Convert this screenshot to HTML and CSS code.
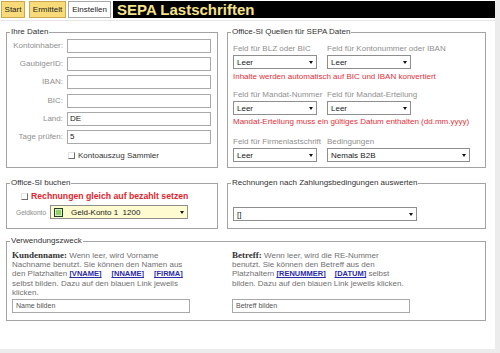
FILE: index.html
```html
<!DOCTYPE html>
<html lang="de">
<head>
<meta charset="utf-8">
<title>SEPA Lastschriften</title>
<link rel="stylesheet" href="styles.css">
</head>
<body>
<div class="page">
  <div class="topbar">
    <div class="tab tab-y tab-start">Start</div>
    <div class="tab tab-y tab-erm">Ermittelt</div>
    <div class="tab tab-ein">Einstellen</div>
    <div class="title">SEPA Lastschriften</div>
  </div>
  <div class="content">
    <div class="row row1">
      <fieldset class="fs fs-left">
        <legend>Ihre Daten</legend>
        <div class="grid">
          <div class="lbl">Kontoinhaber:</div><div class="inp"></div>
          <div class="lbl">GaubigerID:</div><div class="inp"></div>
          <div class="lbl">IBAN:</div><div class="inp"></div>
          <div class="lbl">BIC:</div><div class="inp"></div>
          <div class="lbl">Land:</div><div class="inp">DE</div>
          <div class="lbl">Tage prüfen:</div><div class="inp">5</div>
        </div>
        <div class="chkrow"><span class="chk"></span><span>Kontoauszug Sammler</span></div>
      </fieldset>
      <fieldset class="fs fs-right">
        <legend>Office-SI Quellen für SEPA Daten</legend>
        <div class="q">
          <div class="pair">
            <div class="fld"><div class="fl">Feld für BLZ oder BIC</div><div class="sel"><span>Leer</span><span class="arr"></span></div></div>
            <div class="fld"><div class="fl">Feld für Kontonummer oder IBAN</div><div class="sel"><span>Leer</span><span class="arr"></span></div></div>
          </div>
          <div class="warn">Inhalte werden automatisch auf BIC und IBAN konvertiert</div>
          <div class="pair p2">
            <div class="fld"><div class="fl">Feld für Mandat-Nummer</div><div class="sel"><span>Leer</span><span class="arr"></span></div></div>
            <div class="fld"><div class="fl">Feld für Mandat-Erteilung</div><div class="sel"><span>Leer</span><span class="arr"></span></div></div>
          </div>
          <div class="warn w2">Mandat-Erteilung muss ein gültiges Datum enthalten (dd.mm.yyyy)</div>
          <div class="pair p3">
            <div class="fld"><div class="fl">Feld für Firmenlastschrift</div><div class="sel"><span>Leer</span><span class="arr"></span></div></div>
            <div class="fld wide"><div class="fl">Bedingungen</div><div class="sel"><span>Nemals B2B</span><span class="arr"></span></div></div>
          </div>
        </div>
      </fieldset>
    </div>
    <div class="row row2">
      <fieldset class="fs fs-left">
        <legend>Office-SI buchen</legend>
        <div class="chkrow2"><span class="chk"></span><span class="redbold">Rechnungen gleich auf bezahlt setzen</span></div>
        <div class="geldrow">
          <span class="glbl">Geldkonto</span>
          <div class="sel sel-geld"><span class="gicon"></span><span class="gtext">Geld-Konto 1&nbsp; 1200</span><span class="arr"></span></div>
        </div>
      </fieldset>
      <fieldset class="fs fs-right">
        <legend>Rechnungen nach Zahlungsbedingungen auswerten</legend>
        <div class="sel sel-zb"><span>[]</span><span class="arr"></span></div>
      </fieldset>
    </div>
    <fieldset class="fs fs-full">
      <legend>Verwendungszweck</legend>
      <div class="vz">
        <div class="vcol">
          <div class="desc"><span class="kb">Kundenname:</span> Wenn leer, wird Vorname<br>Nachname benutzt. Sie können den Namen aus<br>den Platzhalten <a class="ph">[VNAME]</a><a class="ph ph-gap">[NNAME]</a><a class="ph ph-gap">[FIRMA]</a><br>selbst bilden. Dazu auf den blauen Link jeweils<br>klicken.</div>
          <div class="inp inp-vz">Name bilden</div>
        </div>
        <div class="vcol">
          <div class="desc"><span class="kb">Betreff:</span> Wenn leer, wird die RE-Nummer<br>benutzt. Sie können den Betreff aus den<br>Platzhaltern <a class="ph">[RENUMMER]</a><a class="ph ph-gap2">[DATUM]</a> selbst<br>bilden. Dazu auf den blauen Link jeweils klicken.</div>
          <div class="inp inp-vz">Betreff bilden</div>
        </div>
      </div>
    </fieldset>
  </div>
</div>
</body>
</html>
```

FILE: styles.css
```css
* { box-sizing: border-box; }
body {
  margin: 0;
  background: #ececec;
  font-family: "Liberation Sans", Arial, sans-serif;
  font-size: 8px;
  color: #333;
}
.page { width: 495px; height: 349px; background: #fff; }

.topbar { display: flex; height: 20px; padding-top: 1px; background: #fff; }
.tab {
  height: 17px;
  display: flex; align-items: center; justify-content: center;
  font-size: 8px; color: #222;
  border: 1px solid #c9a94e;
}
.tab-y { background: #f8da78; }
.tab-start { margin-left: 1px; width: 24px; }
.tab-erm { margin-left: 4px; width: 37px; }
.tab-ein { margin-left: 2px; width: 43px; background: #fff; border-color: #a9a9a9; }
.title {
  margin-left: 2px; flex: 1; height: 17px;
  background: #000; color: #f6e38b;
  font-weight: bold; font-size: 15px;
  padding-left: 4px;
  display: flex; align-items: center;
}

.content { border-top: 1px solid #e6e6e6; padding: 6px 0 0 6px; }

.fs {
  margin: 0; padding: 0; min-width: 0;
  border: 1px solid #a3a3a3;
}
.fs legend {
  padding: 0 1px; margin-left: 3px;
  line-height: 10px; font-size: 8px; color: #333;
}
.row { display: flex; gap: 9px; }
.row1 .fs { height: 141px; }
.fs-left { width: 212px; }
.fs-right { width: 259px; }
.row2 { margin-top: 10px; }
.row2 .fs { height: 51px; }
.fs-full { width: 480px; height: 85px; margin-top: 7px; }

.grid {
  display: grid;
  grid-template-columns: 55px 144px;
  column-gap: 4px; row-gap: 4.2px;
  grid-auto-rows: 14px;
  margin: 2px 0 0 1px;
}
.lbl { text-align: right; color: #8f8f8f; line-height: 14px; white-space: nowrap; }
.inp {
  border: 1px solid #a9a9a9; height: 14px;
  padding-left: 2px; line-height: 12px; color: #222;
}
.chkrow {
  display: flex; align-items: center; gap: 3px;
  height: 10px; margin: 7px 0 0 61px; color: #333;
}
.chk {
  width: 7px; height: 7px;
  border-left: 1px solid #e2e2e2; border-top: 1px solid #e2e2e2;
  border-right: 1px solid #6e6e6e; border-bottom: 1px solid #6e6e6e;
}

.q { padding: 7px 0 0 5px; }
.pair { display: flex; gap: 10px; }
.fld { width: 84px; display: flex; flex-direction: column; }
.fld.wide { width: 143px; }
.fl { height: 10px; line-height: 10px; color: #8f8f8f; white-space: nowrap; }
.fld .sel { margin-top: 1px; }
.warn { color: #e0313a; line-height: 10px; margin-top: 3px; white-space: nowrap; }
.p2 { margin-top: 8px; }
.w2 { margin-top: 2px; }
.p3 { margin-top: 10px; }

.sel {
  height: 14px; border: 1px solid #8e8e8e; background: #fff;
  display: flex; align-items: center;
  padding-left: 3px; color: #1a1a1a; white-space: nowrap;
}
.arr {
  margin-left: auto; margin-right: 3px;
  width: 0; height: 0;
  border-left: 2.5px solid transparent; border-right: 2.5px solid transparent;
  border-top: 3px solid #111;
}

.chkrow2 {
  display: flex; align-items: center;
  height: 10px; margin: 3px 0 0 14px;
}
.redbold { color: #e0252f; font-weight: bold; font-size: 8.7px; margin-left: 3px; white-space: nowrap; }
.geldrow { display: flex; align-items: center; margin: 4px 0 0 9px; }
.glbl { width: 34px; font-size: 6.6px; color: #8a8a8a; }
.sel-geld { width: 138px; background: #fdfbcf; padding-left: 3px; }
.gicon {
  width: 9px; height: 9px;
  border: 1px solid #1f3f1f; background: #8ecf6c;
  box-shadow: inset 0 0 0 1px #d8f0c8;
}
.gtext { margin-left: 8px; }
.sel-zb { width: 184px; margin: 19px 0 0 5px; }

.vz { display: flex; gap: 42px; padding: 5px 0 0 5px; }
.vcol { width: 178px; }
.desc { height: 46px; line-height: 9.2px; color: #707070; white-space: nowrap; }
.kb { font-family: "Liberation Serif", "Times New Roman", serif; font-weight: bold; font-size: 9px; color: #333; }
.ph { color: #2b2ba8; font-weight: bold; text-decoration: underline; font-size: 7.5px; }
.ph-gap { margin-left: 10px; }
.ph-gap2 { margin-left: 9px; }
.inp-vz { margin-top: 2px; width: 178px; font-size: 7px; color: #555; padding-left: 3px; }
```
